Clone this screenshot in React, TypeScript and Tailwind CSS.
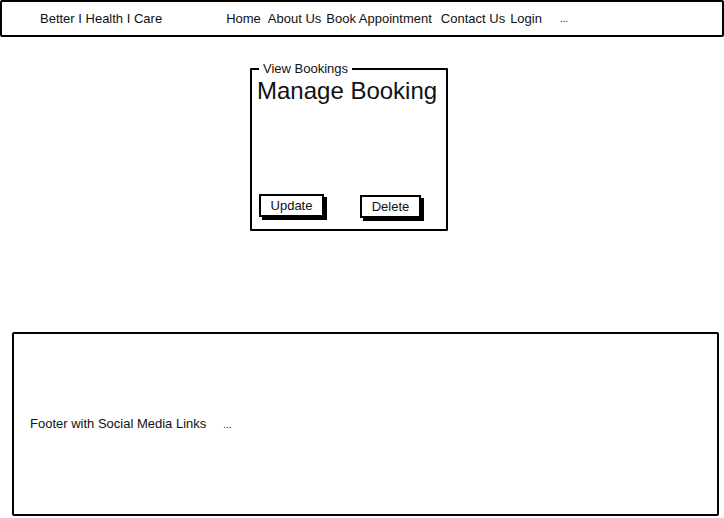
import React from 'react';

// hand-placed gaps, the wireframe spacing isn't even
const navLinks = [
    { label: 'Home', gap: 'ml-0' },
    { label: 'About Us', gap: 'ml-[7px]' },
    { label: 'Book Appointment', gap: 'ml-[5px]' },
    { label: 'Contact Us', gap: 'ml-[9px]' },
    { label: 'Login', gap: 'ml-[5px]' },
];

const SketchButton: React.FC<{ label: string; className?: string }> = ({ label, className = '' }) => (
    <button
        className={`h-[23px] border-2 border-black bg-white text-[13px] leading-none text-[#111] shadow-[3px_3px_0_#000] ${className}`}
    >
        {label}
    </button>
);

export default function App() {
    return (
        <div className="w-[724px] h-[518px] bg-white text-[#111] overflow-hidden" style={{ fontFamily: '"Liberation Sans", Arial, sans-serif' }}>
            <nav className="flex items-center h-[37px] border-2 border-black rounded-[2px] pl-[38px] text-[13px]">
                <span>Better I Health I Care</span>
                <div className="flex items-center ml-[64px]">
                    {navLinks.map(l => (
                        <a key={l.label} className={`whitespace-nowrap ${l.gap}`}>{l.label}</a>
                    ))}
                </div>
                <span className="ml-[18px] text-[10px]">...</span>
            </nav>

            <fieldset className="ml-[250px] mt-[24px] w-[198px] h-[170px] border-2 border-black rounded-[1px] pl-[5px] pt-0">
                <legend className="ml-[2px] px-1 text-[13px] leading-4">View Bookings</legend>
                <h1 className="text-[24px] leading-7 whitespace-nowrap">Manage Booking</h1>
                <div className="flex items-start mt-[89px] pl-[2px]">
                    <SketchButton label="Update" className="w-[65px]" />
                    <SketchButton label="Delete" className="w-[61px] ml-[36px] mt-[1px]" />
                </div>
            </fieldset>

            <footer className="ml-[12px] mt-[101px] w-[707px] h-[184px] border-2 border-black rounded-[2px] flex items-center pl-[16px] text-[13px]">
                <span>Footer with Social Media Links</span>
                <span className="ml-[17px] text-[10px]">...</span>
            </footer>
        </div>
    );
}
